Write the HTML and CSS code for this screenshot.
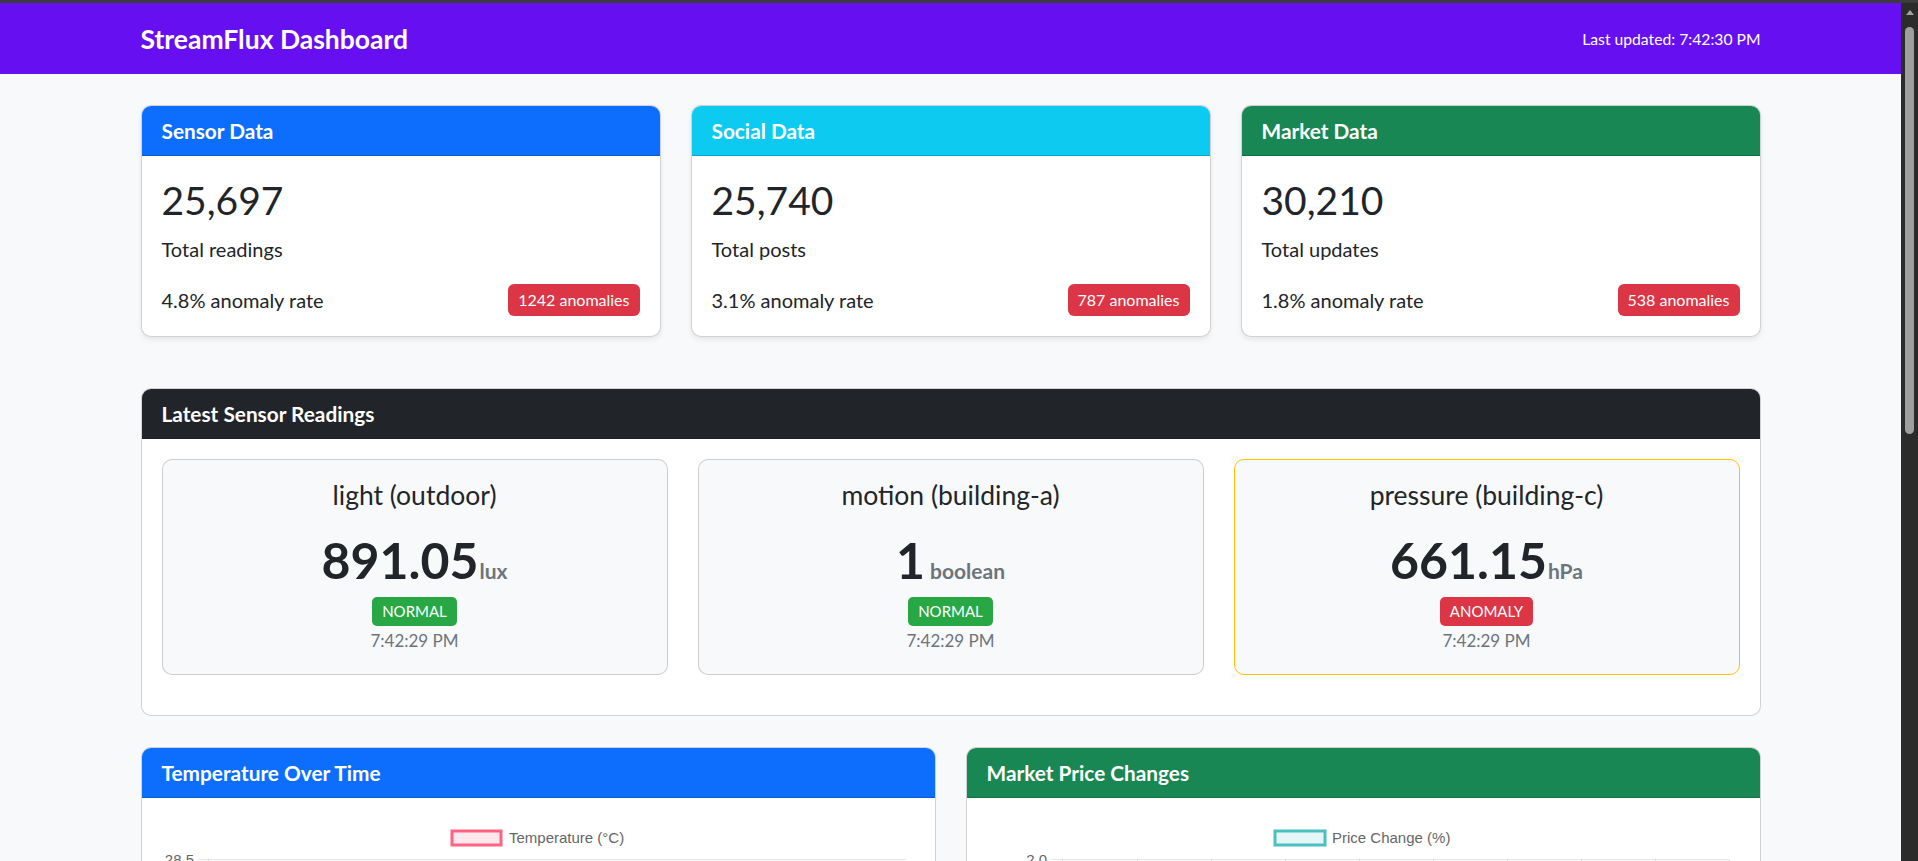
FILE: index.html
```html
<!DOCTYPE html>
<html lang="en">
<head>
<meta charset="utf-8">
<title>StreamFlux Dashboard</title>
<link rel="stylesheet" href="styles.css">
</head>
<body>
<div class="topstrip"></div>
<div class="window">
  <div class="page">
    <nav class="navbar">
      <div class="container nav-inner">
        <span class="brand">StreamFlux Dashboard</span>
        <span class="updated">Last updated: 7:42:30 PM</span>
      </div>
    </nav>
    <main class="container main">
      <section class="row3">
        <div class="card">
          <div class="card-header bg-primary">Sensor Data</div>
          <div class="card-body">
            <h2 class="stat-num">25,697</h2>
            <p class="stat-label">Total readings</p>
            <div class="stat-foot"><span>4.8% anomaly rate</span><span class="badge-count">1242 anomalies</span></div>
          </div>
        </div>
        <div class="card">
          <div class="card-header bg-info">Social Data</div>
          <div class="card-body">
            <h2 class="stat-num">25,740</h2>
            <p class="stat-label">Total posts</p>
            <div class="stat-foot"><span>3.1% anomaly rate</span><span class="badge-count">787 anomalies</span></div>
          </div>
        </div>
        <div class="card">
          <div class="card-header bg-success">Market Data</div>
          <div class="card-body">
            <h2 class="stat-num">30,210</h2>
            <p class="stat-label">Total updates</p>
            <div class="stat-foot"><span>1.8% anomaly rate</span><span class="badge-count">538 anomalies</span></div>
          </div>
        </div>
      </section>

      <section class="card readings">
        <div class="card-header bg-dark">Latest Sensor Readings</div>
        <div class="card-body">
          <div class="row3">
            <div class="reading">
              <h5 class="reading-title">light (outdoor)</h5>
              <div class="reading-value">891.05<span class="unit">lux</span></div>
              <div class="state-wrap"><span class="badge-state normal">NORMAL</span></div>
              <div class="reading-time">7:42:29 PM</div>
            </div>
            <div class="reading">
              <h5 class="reading-title">motion (building-a)</h5>
              <div class="reading-value">1<span class="unit unit-gap">boolean</span></div>
              <div class="state-wrap"><span class="badge-state normal">NORMAL</span></div>
              <div class="reading-time">7:42:29 PM</div>
            </div>
            <div class="reading is-anomaly">
              <h5 class="reading-title">pressure (building-c)</h5>
              <div class="reading-value">661.15<span class="unit">hPa</span></div>
              <div class="state-wrap"><span class="badge-state anomaly">ANOMALY</span></div>
              <div class="reading-time">7:42:29 PM</div>
            </div>
          </div>
        </div>
      </section>

      <section class="row2">
        <div class="card">
          <div class="card-header bg-primary">Temperature Over Time</div>
          <div class="card-body chart-body">
            <svg class="chart" width="754" height="380" viewBox="0 0 754 380">
              <rect x="290" y="13" width="49" height="14" fill="rgba(255,99,132,0.15)" stroke="rgb(255,99,132)" stroke-width="3"/>
              <text x="347" y="25" class="chart-text">Temperature (°C)</text>
              <g class="grid">
                <line x1="46" y1="41.5" x2="744" y2="41.5"/>
                <line x1="46" y1="101.5" x2="744" y2="101.5"/>
                <line x1="46" y1="161.5" x2="744" y2="161.5"/>
                <line x1="46" y1="221.5" x2="744" y2="221.5"/>
                <line x1="46" y1="281.5" x2="744" y2="281.5"/>
                <line x1="36" y1="41.5" x2="46" y2="41.5"/>
                <line x1="36" y1="101.5" x2="46" y2="101.5"/>
                <line x1="46.5" y1="41" x2="46.5" y2="341"/>
              </g>
              <text x="32" y="46.5" class="chart-text" text-anchor="end">28.5</text>
            </svg>
          </div>
        </div>
        <div class="card">
          <div class="card-header bg-success">Market Price Changes</div>
          <div class="card-body chart-body">
            <svg class="chart" width="753" height="380" viewBox="0 0 753 380">
              <rect x="288" y="13" width="50" height="14" fill="rgba(75,192,192,0.15)" stroke="rgb(75,192,192)" stroke-width="3"/>
              <text x="345" y="25" class="chart-text">Price Change (%)</text>
              <g class="grid">
                <line x1="65" y1="41.5" x2="742" y2="41.5"/>
                <line x1="65" y1="101.5" x2="742" y2="101.5"/>
                <line x1="65" y1="161.5" x2="742" y2="161.5"/>
                <line x1="65" y1="221.5" x2="742" y2="221.5"/>
                <line x1="75.5" y1="41" x2="75.5" y2="341"/>
                <line x1="150.5" y1="41" x2="150.5" y2="341"/>
                <line x1="224.5" y1="41" x2="224.5" y2="341"/>
                <line x1="298.5" y1="41" x2="298.5" y2="341"/>
                <line x1="372.5" y1="41" x2="372.5" y2="341"/>
                <line x1="446.5" y1="41" x2="446.5" y2="341"/>
                <line x1="520.5" y1="41" x2="520.5" y2="341"/>
                <line x1="594.5" y1="41" x2="594.5" y2="341"/>
                <line x1="668.5" y1="41" x2="668.5" y2="341"/>
                <line x1="742.5" y1="41" x2="742.5" y2="341"/>
              </g>
              <text x="60" y="46.5" class="chart-text" text-anchor="end">2.0</text>
            </svg>
          </div>
        </div>
      </section>
    </main>
  </div>
  <div class="scrollbar">
    <span class="sb-up"></span>
    <span class="sb-thumb"></span>
  </div>
</div>
</body>
</html>
```
FILE: styles.css
```css
* { box-sizing: border-box; }
html, body { margin: 0; height: 100%; }
body {
  display: flex;
  flex-direction: column;
  overflow: hidden;
  font-family: Lato, "Noto Sans", sans-serif;
  color: #212529;
  background: #3c3c3c;
}
.topstrip { height: 3px; flex: none; background: #3c3c3c; }
.window { flex: 1; display: flex; min-height: 0; }
.page { flex: 1; min-width: 0; overflow: hidden; background: #f8f9fa; }

.scrollbar {
  width: 17px;
  flex: none;
  background: #2b2b2b;
  display: flex;
  flex-direction: column;
  align-items: center;
  padding-top: 7px;
}
.sb-up {
  width: 0; height: 0;
  border-left: 4px solid transparent;
  border-right: 4px solid transparent;
  border-bottom: 5px solid #a3a3a3;
}
.sb-thumb {
  margin-top: 12px;
  width: 9px;
  height: 407px;
  border-radius: 5px;
  background: #9f9f9f;
}

.container { max-width: 1650px; margin: 0 auto; padding: 0 15px; }

.navbar { background: #6610f2; height: 71px; }
.nav-inner { height: 100%; display: flex; align-items: center; justify-content: space-between; }
.brand { color: #fff; font-weight: 700; font-size: 26.5px; line-height: 30px; }
.updated { color: #fff; font-size: 15.7px; }

.main { padding-top: 31px; padding-bottom: 40px; }

.row3 { display: grid; grid-template-columns: repeat(3, 1fr); gap: 30px; }
.row2 { display: grid; grid-template-columns: repeat(2, 1fr); gap: 30px; margin-top: 31px; }

.card {
  background: #fff;
  border: 1px solid rgba(0, 0, 0, 0.175);
  border-radius: 10px;
  overflow: hidden;
  box-shadow: 0 2.5px 5px rgba(0, 0, 0, 0.075);
}
.card-header {
  height: 50px;
  padding: 0 20px;
  display: flex;
  align-items: center;
  color: #fff;
  font-weight: 700;
  font-size: 20.8px;
  border-bottom: 1px solid rgba(0, 0, 0, 0.175);
}
.bg-primary { background: #0d6efd; }
.bg-info { background: #0dcaf0; }
.bg-success { background: #198754; }
.bg-dark { background: #212529; }

.card-body { padding: 20px; }

.stat-num { font-size: 39px; line-height: 48px; margin: 0 0 10px; font-weight: 400; }
.stat-label { font-size: 20px; line-height: 30px; margin: 0 0 20px; }
.stat-foot {
  display: flex;
  justify-content: space-between;
  align-items: center;
  font-size: 20px;
  line-height: 30px;
}
.badge-count {
  background: #dc3545;
  color: #fff;
  font-size: 16px;
  line-height: 16px;
  padding: 8px 10px;
  border-radius: 6px;
}

.readings { margin-top: 51px; box-shadow: none; }
.readings .card-body { padding-bottom: 40px; }

.reading {
  background: #f8f9fa;
  border: 1px solid rgba(0, 0, 0, 0.175);
  border-radius: 10px;
  padding: 20px;
  text-align: center;
}
.reading.is-anomaly { border-color: #ffc107; }
.reading-title { font-size: 26.5px; line-height: 30px; margin: 0 0 19px; font-weight: 400; }
.reading-value { font-size: 50px; line-height: 62px; font-weight: 700; }
.unit { font-size: 21px; line-height: 1; color: #6c757d; font-weight: 700; margin-left: 1px; }
.unit-gap { margin-left: 5px; }
.state-wrap { display: flex; justify-content: center; margin-top: 6px; }
.badge-state {
  color: #fff;
  font-size: 15px;
  line-height: 15px;
  padding: 7px 10px;
  border-radius: 5px;
}
.badge-state.normal { background: #28a745; }
.badge-state.anomaly { background: #dc3545; }
.reading-time { font-size: 17px; line-height: 26px; color: #6c757d; margin-top: 2px; }

.row2 .card { box-shadow: none; }
.chart-body { padding: 20px; }
.chart { display: block; }
.chart-text { font-family: "Liberation Sans", Arial, sans-serif; font-size: 15px; fill: #666; }
.grid line { stroke: rgba(0, 0, 0, 0.1); stroke-width: 1; }
```
